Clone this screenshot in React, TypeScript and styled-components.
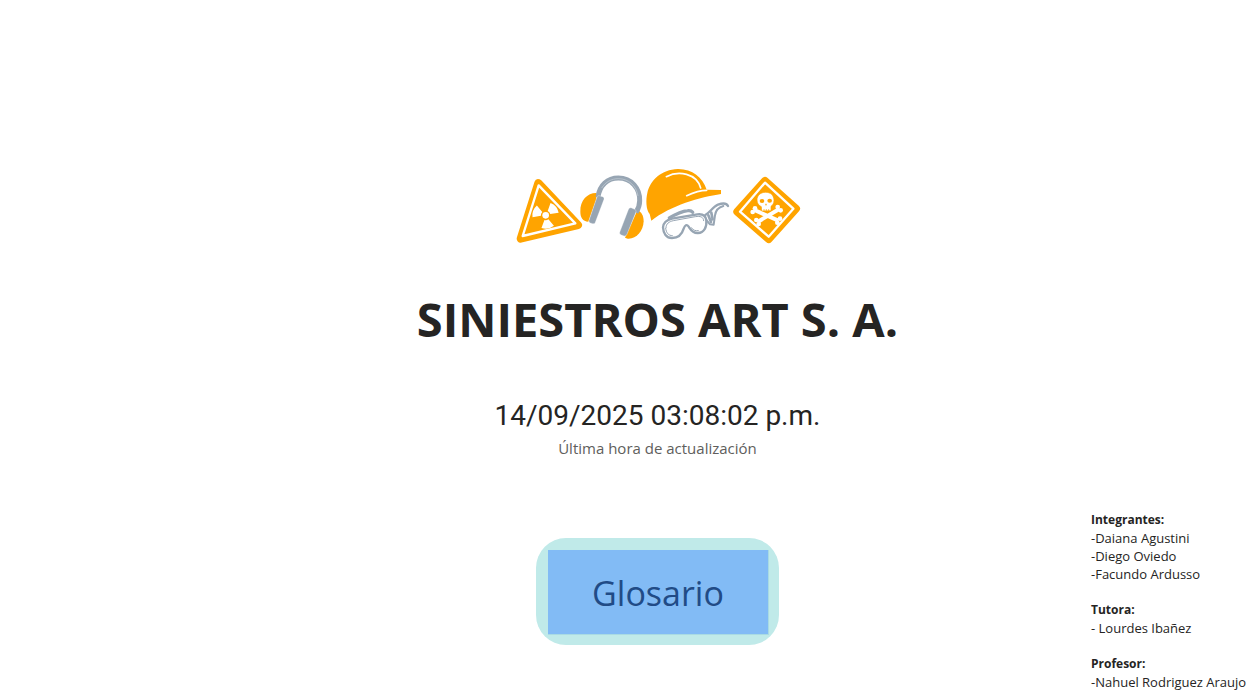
import React from "react";
import styled, { createGlobalStyle } from "styled-components";

const GlobalStyle = createGlobalStyle`
  * { box-sizing: border-box; }
  body { margin: 0; background: #ffffff; color: #252423; font-family: "Open Sans", "Noto Sans", sans-serif; }
`;

const Page = styled.div`
  display: grid;
  grid-template-columns: minmax(0, 1fr) 166px;
  min-height: 100vh;
`;

const Cover = styled.main`
  display: flex;
  flex-direction: column;
  align-items: center;
  padding: 160px 0 56px 224px;
`;

const Banner = styled.svg`
  display: block;
  width: 295px;
  height: 90px;
`;

const Title = styled.h1`
  margin: 37px 0 0;
  font-size: 47px;
  line-height: 64px;
  font-weight: 700;
  white-space: nowrap;
`;

const Updated = styled.section`
  display: flex;
  flex-direction: column;
  align-items: center;
  margin-top: 45px;
  white-space: nowrap;
`;

const Timestamp = styled.time`
  font-family: Roboto, sans-serif;
  font-size: 28px;
  line-height: 40px;
`;

const Caption = styled.span`
  font-size: 15px;
  line-height: 24px;
  color: #605e5c;
`;

const GlossaryButton = styled.button`
  width: 243px;
  height: 107px;
  margin: 78px 0 0;
  padding: 12px 10px 10px 12px;
  border: 0;
  border-radius: 30px;
  background: #c0eae9;
  font: inherit;
  cursor: pointer;
`;

const ButtonFace = styled.span`
  display: flex;
  align-items: center;
  justify-content: center;
  height: 100%;
  padding-top: 2px;
  border-right: 1px solid #a9dbe3;
  border-bottom: 1px solid #a9dbe3;
  background: #82bbf5;
  color: #214b86;
  font-size: 34px;
  line-height: 48px;
`;

const Credits = styled.aside`
  display: flex;
  flex-direction: column;
  justify-content: flex-end;
  gap: 18px;
  padding-bottom: 10px;
  font-size: 13px;
  line-height: 18px;
  white-space: nowrap;
`;

const CreditHeading = styled.h2`
  margin: 0;
  font-size: 12px;
  line-height: 18px;
  font-weight: 700;
`;

const CreditList = styled.ul`
  margin: 0;
  padding: 0;
  list-style: none;
`;

const ORANGE = "#ffa400";
const GRAY = "#97a5b3";

const groups = [
  { heading: "Integrantes:", people: ["-Daiana Agustini", "-Diego Oviedo", "-Facundo Ardusso"] },
  { heading: "Tutora:", people: ["- Lourdes Ibañez"] },
  { heading: "Profesor:", people: ["-Nahuel Rodriguez Araujo"] },
];

function Radiation() {
  return (
    <g>
      <path d="M85 69 L204 195 L32 236 Z" fill={ORANGE} stroke={ORANGE} strokeWidth="24" strokeLinejoin="round" />
      <path d="M86 76 L196 190 L38 228 Z" fill="none" stroke="#fff" strokeWidth="7" strokeLinejoin="round" />
      <g transform="translate(107 166)" fill="#fff">
        <circle r="10" />
        {[-10, 110, 230].map((angle) => (
          <path key={angle} transform={`rotate(${angle})`} d="M-6 13 L-19 35 A40 40 0 0 0 19 35 L6 13 A14 14 0 0 1 -6 13 Z" />
        ))}
      </g>
    </g>
  );
}

function Headphones() {
  return (
    <g transform="translate(195 0)">
      <path d="M65 99 C38 98 15 120 16 155 C16 172 23 184 40 185 L64 118 Z" fill={ORANGE} />
      <path d="M187 151 C197 153 206 166 206 184 C205 214 183 238 158 236 L150 233 Z" fill={ORANGE} />
      <path d="M69 112 C73 76 98 54 130 54 C170 54 195 86 194 122 C194 136 189 148 183 157" fill="none" stroke={GRAY} strokeWidth="15" />
      <path d="M80 84 C92 65 110 56 130 56 C162 56 184 78 189 108" fill="none" stroke="#c5ced6" strokeWidth="2" />
      <path d="M72 107 L83 110 Q89 112 87 118 L61 187 Q59 193 53 191 L46 189 Q40 187 42 181 L66 111 Q68 106 72 107 Z" fill={GRAY} stroke="#fff" strokeWidth="1" />
      <path d="M168 143 L179 148 Q185 150 183 156 L156 223 Q153 230 147 228 L139 225 Q132 223 134 217 L160 149 Q162 142 168 143 Z" fill={GRAY} stroke="#fff" strokeWidth="1" />
    </g>
  );
}

function HelmetAndGoggles() {
  return (
    <g transform="translate(390 0)" fill="none" strokeLinecap="round" strokeLinejoin="round">
      <path d="M34 182 L29 162 C18 151 17 119 22 99 C31 60 65 29 113 27 C155 26 188 51 200 89 L243 90 L243 102 C181 111 91 137 34 182 Z" fill={ORANGE} />
      <path d="M79 50 C115 31 170 39 182 84" stroke="#fff" strokeWidth="5" />
      <path d="M140 107 C164 96 184 91 200 91" stroke="#fff" strokeWidth="5" />
      <g stroke={GRAY}>
        <path d="M88 174 C105 164 125 154 143 152 C150 151 155 153 158 157" strokeWidth="10" />
        <path d="M69 202 C70 188 80 180 96 176 L172 163 C188 161 197 166 199 181 C201 201 192 218 174 219 C156 220 151 207 146 200 C140 192 135 195 131 206 C126 223 115 234 96 234 C79 234 70 220 69 202 Z" fill="#fff" strokeWidth="7" />
        <path d="M78 203 C78 191 87 185 100 182 L166 170 C181 168 190 170 191 182" strokeWidth="3" />
        <path d="M77 205 C79 219 85 227 97 227 M154 203 C159 211 166 213 175 212" strokeWidth="3" />
        <path d="M196 165 C209 158 220 139 234 134 C248 129 260 130 264 138" strokeWidth="7" />
        <path d="M199 180 L210 193 L221 194 L225 166 C227 151 235 142 250 138" strokeWidth="6" />
        <path d="M205 166 L213 186 M214 158 L218 178" strokeWidth="8" />
      </g>
    </g>
  );
}

function SkullSign() {
  return (
    <g transform="translate(645 15)">
      <path d="M120 48 L213 131 L131 222 L37 140 Z" fill={ORANGE} stroke={ORANGE} strokeWidth="24" strokeLinejoin="round" />
      <path d="M120 53 L205 131 L131 215 L45 140 Z" fill="none" stroke="#fff" strokeWidth="7" strokeLinejoin="round" />
      <g stroke="#fff" strokeWidth="12" fill="#fff">
        <path d="M88 135 L160 167 M163 132 L99 170" />
        <g stroke="none">
          <circle cx="90" cy="130" r="7" />
          <circle cx="83" cy="141" r="7" />
          <circle cx="158" cy="126" r="7" />
          <circle cx="167" cy="136" r="7" />
          <circle cx="94" cy="165" r="7" />
          <circle cx="101" cy="177" r="7" />
          <circle cx="165" cy="161" r="7" />
          <circle cx="157" cy="173" r="7" />
        </g>
      </g>
      <path d="M121 82 C137 81 147 92 147 106 C147 115 143 121 138 124 L138 137 L110 138 L109 125 C101 121 96 115 96 105 C96 91 107 82 121 82 Z" fill="#fff" stroke={ORANGE} strokeWidth="2" />
      <g fill={ORANGE}>
        <ellipse cx="111" cy="108" rx="7" ry="6" />
        <ellipse cx="134" cy="107" rx="7" ry="6" />
        <path d="M123 115 L126 121 L120 121 Z" />
      </g>
      <path d="M117 132 V138 M124 132 V138 M131 132 V138" stroke={ORANGE} strokeWidth="2" />
    </g>
  );
}

export default function App() {
  return (
    <>
      <GlobalStyle />
      <Page>
        <Cover>
          <Banner viewBox="0 0 885 270" aria-hidden="true">
            <Radiation />
            <Headphones />
            <HelmetAndGoggles />
            <SkullSign />
          </Banner>
          <Title>SINIESTROS ART S. A.</Title>
          <Updated>
            <Timestamp dateTime="2025-09-14T15:08:02">14/09/2025 03:08:02 p.m.</Timestamp>
            <Caption>Última hora de actualización</Caption>
          </Updated>
          <GlossaryButton type="button">
            <ButtonFace>Glosario</ButtonFace>
          </GlossaryButton>
        </Cover>
        <Credits>
          {groups.map((group) => (
            <section key={group.heading}>
              <CreditHeading>{group.heading}</CreditHeading>
              <CreditList>
                {group.people.map((person) => (
                  <li key={person}>{person}</li>
                ))}
              </CreditList>
            </section>
          ))}
        </Credits>
      </Page>
    </>
  );
}
